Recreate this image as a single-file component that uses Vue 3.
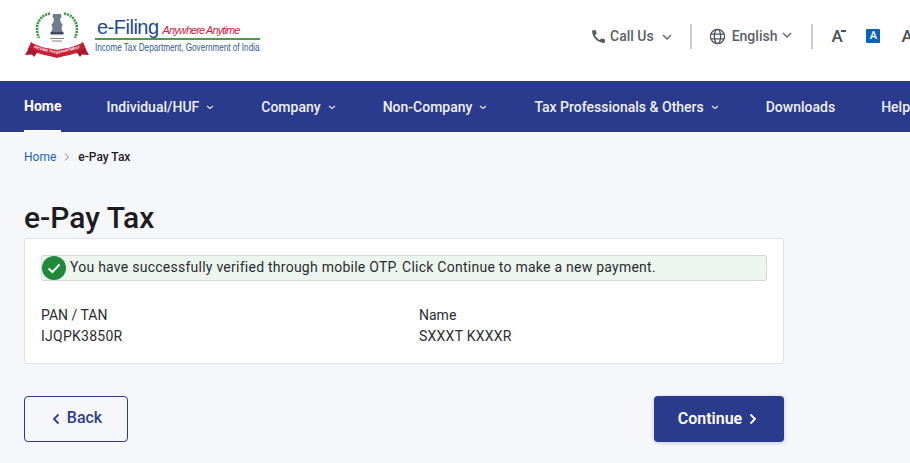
<template>
  <div class="page">
    <header class="top">
      <div class="logo">
        <svg class="emblem" width="66" height="46" viewBox="0 0 66 46">
          <path d="M26 1.500C15 3 10 14 15 26" fill="none" stroke="#3f9a4a" stroke-width="2.600" stroke-dasharray="2.200 .8"/>
          <path d="M40 1.500C51 3 56 14 51 26" fill="none" stroke="#3f9a4a" stroke-width="2.600" stroke-dasharray="2.200 .8"/>
          <path d="M29 2h8l.5 3-1.500 2 1 4 1.500 1-1 5 1.500 3H27l1.500-3-1-5 1.500-1 1-4L28.500 5z" fill="#6f7c8e"/>
          <path d="M26.500 20h13v2.500h-13z" fill="#3d4a5c"/>
          <path d="M26 26.500h14M28 29h10" stroke="#7f858c" stroke-width="1.100"/>
          <path d="M7 30c7 5 16 6 26 8 10-2 19-3 26-8l3 7c-8 5-19 6-29 9C23 43 12 42 4 37z" fill="#c81e36"/>
          <path d="M5 36 1 43l7-.5 2 2.500 3.500-5zM61 36l4 7-7-.5-2 2.500-3.500-5z" fill="#a9182c"/>
          <path id="ribbonPath" d="M7 34.500c8 4 17 5 26 7.500 9-2.500 18-3.500 26-7.500" fill="none"/>
          <text class="ribbon-text"><textPath href="#ribbonPath" startOffset="3">INCOME TAX DEPARTMENT</textPath></text>
        </svg>
        <div class="wordmark">
          <div class="brand-line">
            <span class="brand">e-Filing</span>
            <span class="tagline">Anywhere Anytime</span>
          </div>
          <div class="dept">Income Tax Department, Government of India</div>
        </div>
      </div>
      <div class="tools">
        <div class="tool">
          <svg width="17" height="17" viewBox="0 0 24 24"><path d="M20.010 15.380c-1.230 0-2.420-.2-3.530-.56a.977.977 0 0 0-1.010.24l-1.570 1.970c-2.830-1.350-5.480-3.900-6.890-6.830l1.950-1.660c.27-.28.35-.67.24-1.020-.37-1.110-.56-2.300-.56-3.530 0-.54-.45-.99-.99-.99H4.190C3.650 3 3 3.240 3 3.990 3 13.280 10.730 21 20.010 21c.71 0 .99-.63.99-1.180v-3.450c0-.54-.45-.99-.99-.99z" fill="#525963"/></svg>
          <span>Call Us</span>
          <svg class="caret" width="12" height="12" viewBox="0 0 12 12"><path d="M2 4l4 4 4-4" fill="none" stroke="#5c636d" stroke-width="1.300"/></svg>
        </div>
        <i class="sep"></i>
        <div class="tool lang">
          <svg width="17" height="17" viewBox="0 0 24 24" fill="none" stroke="#4c535d" stroke-width="1.800"><circle cx="12" cy="12" r="10"/><ellipse cx="12" cy="12" rx="4.500" ry="10"/><path d="M2.500 8.500h19M2.500 15.500h19"/></svg>
          <span>English</span>
          <svg class="caret up" width="12" height="12" viewBox="0 0 12 12"><path d="M2 4l4 4 4-4" fill="none" stroke="#5c636d" stroke-width="1.300"/></svg>
        </div>
        <i class="sep"></i>
        <div class="font-btn">A<b class="mark"></b></div>
        <div class="font-btn active">A</div>
        <div class="font-btn">A<b class="mark"></b></div>
      </div>
    </header>

    <nav class="nav">
      <a v-for="item in navItems" :key="item.label" class="nav-item" :class="{ current: item.current }">
        {{ item.label }}
        <svg v-if="item.menu" width="8" height="8" viewBox="0 0 8 8"><path d="M1 3l3 2.500L7 3" fill="none" stroke="#e6e9f4" stroke-width="1.200"/></svg>
      </a>
    </nav>

    <main class="content">
      <div class="crumbs">
        <a class="crumb-link">Home</a>
        <svg width="8" height="10" viewBox="0 0 8 10"><path d="M2 1.500 5.500 5 2 8.500" fill="none" stroke="#7a8089" stroke-width="1"/></svg>
        <span>e-Pay Tax</span>
      </div>
      <h1>e-Pay Tax</h1>
      <section class="card">
        <div class="alert">
          <svg class="ok" width="24" height="24" viewBox="0 0 24 24"><circle cx="12" cy="12" r="12" fill="#1f8a3c"/><path d="M6.500 12.500 10.500 16 17.500 8.500" fill="none" stroke="#fff" stroke-width="2"/></svg>
          <span>You have successfully verified through mobile OTP. Click Continue to make a new payment.</span>
        </div>
        <div class="fields">
          <div v-for="f in fields" :key="f.label" class="field">
            <div>{{ f.label }}</div>
            <div class="value">{{ f.value }}</div>
          </div>
        </div>
      </section>
      <div class="actions">
        <button class="btn back">
          <svg width="10" height="12" viewBox="0 0 10 12"><path d="M7.500 1.500 3 6l4.500 4.500" fill="none" stroke="#2a3a8c" stroke-width="1.800"/></svg>
          <span>Back</span>
        </button>
        <button class="btn next">
          <span>Continue</span>
          <svg width="10" height="12" viewBox="0 0 10 12"><path d="M2.500 1.500 7 6l-4.500 4.500" fill="none" stroke="#fff" stroke-width="1.800"/></svg>
        </button>
      </div>
    </main>
  </div>
</template>

<script setup>
const navItems = [
  { label: 'Home', current: true },
  { label: 'Individual/HUF', menu: true },
  { label: 'Company', menu: true },
  { label: 'Non-Company', menu: true },
  { label: 'Tax Professionals & Others', menu: true },
  { label: 'Downloads' },
  { label: 'Help' }
]

const fields = [
  { label: 'PAN / TAN', value: 'IJQPK3850R' },
  { label: 'Name', value: 'SXXXT KXXXR' }
]
</script>

<style>
html, body {
  margin: 0;
  overflow: hidden;
}
</style>

<style scoped>
.page {
  width: 910px;
  height: 463px;
  overflow: hidden;
  background: #f5f7fb;
  font-family: Roboto, "Liberation Sans", sans-serif;
  color: #1f1f1f;
}
.top {
  height: 81px;
  background: #fff;
  display: flex;
  align-items: center;
  justify-content: space-between;
  padding-left: 24px;
  box-sizing: border-box;
}
.logo {
  display: flex;
  align-items: flex-start;
  gap: 5px;
  margin-top: -11px;
}
.ribbon-text {
  font-family: "Liberation Sans", sans-serif;
  font-size: 3.600px;
  font-weight: 700;
  fill: #fff;
}
.wordmark {
  margin-top: 5px;
  width: 165px;
}
.brand-line {
  display: flex;
  align-items: baseline;
  gap: 4px;
  border-bottom: 2px solid #4d9a4f;
  height: 21px;
  line-height: 21px;
  white-space: nowrap;
  padding-left: 2px;
}
.brand {
  font-family: "Liberation Sans", sans-serif;
  font-size: 20px;
  letter-spacing: -0.500px;
  color: #1e4a87;
}
.tagline {
  font-family: "Liberation Sans", sans-serif;
  font-style: italic;
  font-size: 11px;
  color: #d3213f;
  letter-spacing: -0.900px;
}
.dept {
  font-family: "Liberation Sans", sans-serif;
  font-size: 10.500px;
  color: #2e5a8e;
  line-height: 14px;
  white-space: nowrap;
  transform: scaleX(0.775);
  transform-origin: left;
}
.tools {
  display: flex;
  align-items: center;
  flex: none;
  width: 320px;
  overflow: hidden;
  margin-top: -9px;
  font-size: 14px;
  color: #5b6169;
  font-weight: 500;
  white-space: nowrap;
}
.tool {
  display: flex;
  align-items: center;
  gap: 3px;
  flex: none;
}
.caret {
  margin-left: 4px;
  margin-top: 2px;
}
.caret.up {
  margin-top: -2px;
  margin-left: -2px;
}
.lang {
  gap: 6px;
}
.sep {
  width: 2px;
  height: 25px;
  background: #c9cbce;
  margin: 0 17px;
  flex: none;
}
.tools .sep:last-of-type {
  margin: 0 18px;
}
.font-btn {
  position: relative;
  width: 14px;
  height: 14px;
  line-height: 14px;
  font-size: 17px;
  color: #4a4f55;
  margin-right: 21px;
  flex: none;
}
.font-btn.active {
  background: #0b62bd;
  color: #fff;
  font-size: 11px;
  text-align: center;
  border-radius: 1px;
}
.mark {
  position: absolute;
  top: 1px;
  right: -1px;
  width: 5px;
  height: 1.500px;
  background: #4a4f55;
}
.nav {
  height: 51px;
  background: #2a3a8c;
  display: flex;
  padding-left: 24px;
  gap: 47px;
  white-space: nowrap;
}
.nav-item {
  position: relative;
  display: flex;
  align-items: center;
  gap: 7px;
  color: #eef0f8;
  font-size: 14px;
  font-weight: 500;
  padding-top: 1px;
  box-sizing: border-box;
  flex: none;
}
.nav-item.current {
  color: #fff;
  font-weight: 700;
  padding-top: 1px;
  padding-bottom: 0;
  border-bottom: 2px solid #fff;
  margin-right: -2px;
}
.nav-item:last-child {
  margin-left: -1px;
}
.content {
  padding: 0 24px;
  width: 760px;
}
.crumbs {
  display: flex;
  align-items: center;
  gap: 7px;
  height: 50px;
  font-size: 12px;
  font-weight: 500;
  color: #202225;
}
.crumb-link {
  color: #1565b8;
  font-weight: 400;
}
h1 {
  font-size: 30px;
  font-weight: 500;
  line-height: 34px;
  margin: 19px 0 0;
  color: #1d1d1f;
}
.card {
  margin-top: 3px;
  height: 126px;
  box-sizing: border-box;
  background: #fff;
  border: 1px solid #dfe2e8;
  border-radius: 3px;
  padding: 16px;
}
.alert {
  display: flex;
  align-items: center;
  gap: 4px;
  height: 26px;
  box-sizing: border-box;
  background: #edf5ef;
  border: 1px solid #d5dcd8;
  border-radius: 2px;
  font-size: 14px;
  letter-spacing: 0.250px;
  color: #2a2d30;
}
.alert span {
  padding-bottom: 2px;
}
.ok {
  flex: none;
}
.fields {
  display: grid;
  grid-template-columns: 378px 1fr;
  margin-top: 24px;
  font-size: 14px;
  line-height: 21px;
  color: #2a2d30;
}
.value {
  letter-spacing: 0.250px;
}
.actions {
  display: flex;
  justify-content: space-between;
  margin-top: 32px;
}
.btn {
  height: 46px;
  font-family: inherit;
  font-size: 16px;
  font-weight: 500;
  border-radius: 4px;
  display: flex;
  align-items: center;
  justify-content: center;
  gap: 6px;
  padding: 0 0 3px;
}
.btn svg {
  margin-top: 3px;
}
.back {
  width: 104px;
  background: transparent;
  border: 1px solid #2a3a8c;
  color: #2f3d8a;
  padding-left: 1px;
}
.next {
  width: 130px;
  background: #2a3a8c;
  border: 0;
  color: #fff;
  font-weight: 600;
  padding: 0 2px 1px 0;
  box-shadow: 0 1px 4px rgba(42, 58, 140, 0.25);
}
.next svg {
  margin-top: 1px;
}
</style>
